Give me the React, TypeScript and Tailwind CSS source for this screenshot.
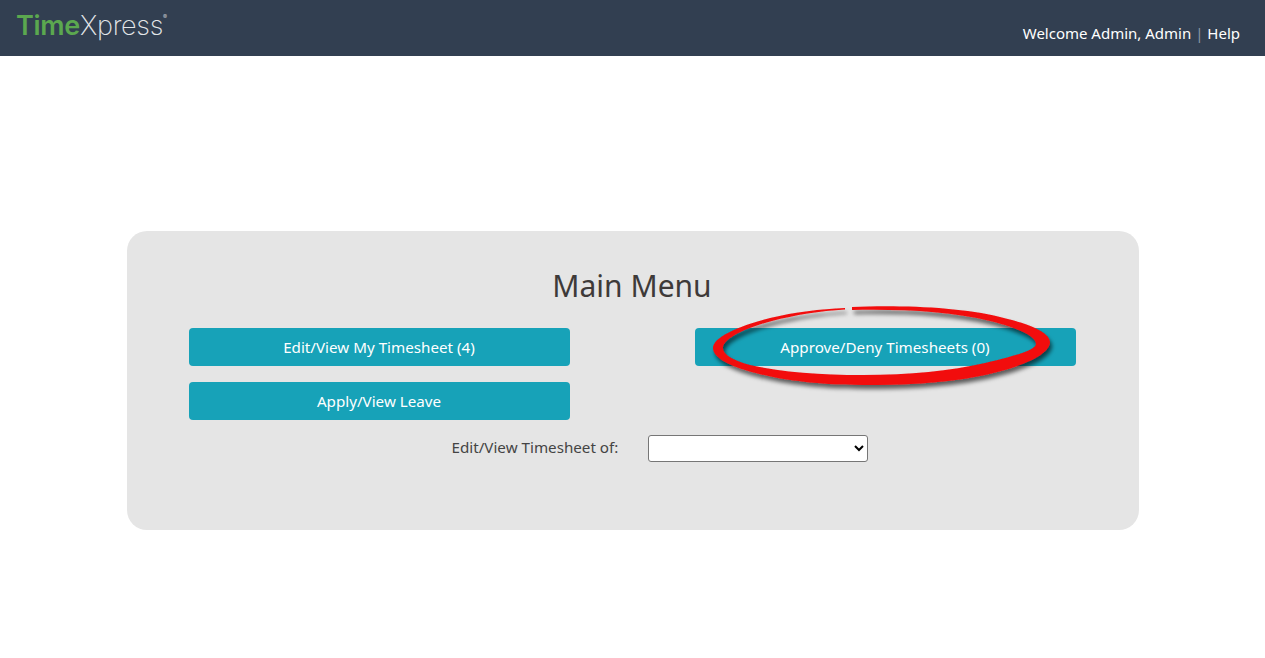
import React from 'react';

const font = { fontFamily: '"Noto Sans", "Open Sans", sans-serif' };

const MenuButton: React.FC<{ label: string }> = ({ label }) => (
    <button className="h-[38px] w-[381px] rounded-[4px] bg-[#17a2b8] pt-[1px] text-center text-[15.2px] text-white">
        {label}
    </button>
);

// Hand drawn red ring round the approve button
const RedRing = () => (
    <svg
        className="absolute left-[700px] top-[300px] pointer-events-none"
        width="370"
        height="95"
        viewBox="0 0 370 95"
        fill="none"
    >
        <defs>
            <filter id="ringShadow" x="-10%" y="-30%" width="120%" height="170%">
                <feDropShadow dx="2" dy="4" stdDeviation="2.2" floodColor="#000" floodOpacity="0.6" />
            </filter>
        </defs>
        <g filter="url(#ringShadow)">
            <path
                fill="#f20d0d"
                d="M152 7C200 5 260 7 300 17C335 25 350 34 350 42C350 55 320 68 280 76C240 84 200 85 163 85C110 85 70 78 45 70C22 63 13 55 13 48C13 38 35 27 70 18C95 12 120 9 145 8L145 9.500C120 11 95 15 72 21C45 28 25 38 23 47C22 54 32 60 50 65C80 72 120 75 163 75C210 75 250 71 285 63C315 56 336 50 336 44C336 36 318 28 290 21C250 11 200 9 152 10Z"
            />
        </g>
    </svg>
);

export default function App() {
    return (
        <div className="relative min-h-[658px] bg-white" style={font}>
            <header className="flex h-14 items-center justify-between bg-[#323f51] pl-4 pr-[25px]">
                <div className="-mt-[5px] flex items-start text-[27px] leading-none tracking-[-0.3px]" style={{ fontFamily: 'Inter, sans-serif' }}>
                    <span className="font-semibold text-[#5ba84f]">Time</span>
                    <span className="font-extralight text-[#e4e7ea]">Xpress</span>
                    <span className="mt-[2px] text-[6px] text-[#c5c9ce]">®</span>
                </div>
                <div className="mt-[10px] text-[15px] text-white">
                    Welcome Admin, Admin <span className="text-[#8b97a5]">|</span> Help
                </div>
            </header>

            <div className="flex justify-center pt-[175px]">
                <main className="h-[299px] w-[1012px] rounded-[20px] bg-[#e5e5e5] pl-[62px] pr-[63px] pt-[33px]">
                    <h1 className="text-center text-[30px] leading-[44px] text-[#3e3a39]">Main Menu</h1>
                    <div className="mt-[20px] flex justify-between">
                        <MenuButton label="Edit/View My Timesheet (4)" />
                        <MenuButton label="Approve/Deny Timesheets (0)" />
                    </div>
                    <div className="mt-4">
                        <MenuButton label="Apply/View Leave" />
                    </div>
                    <div className="mt-[15px] flex items-center">
                        <label className="ml-[263px] w-[196px] pb-[2px] text-[15.2px] text-[#444]">Edit/View Timesheet of:</label>
                        <select className="h-[27px] w-[220px] appearance-auto rounded-[3px] border border-[#767676] bg-white text-[14px]">
                            <option></option>
                        </select>
                    </div>
                </main>
            </div>

            <RedRing />
        </div>
    );
}
